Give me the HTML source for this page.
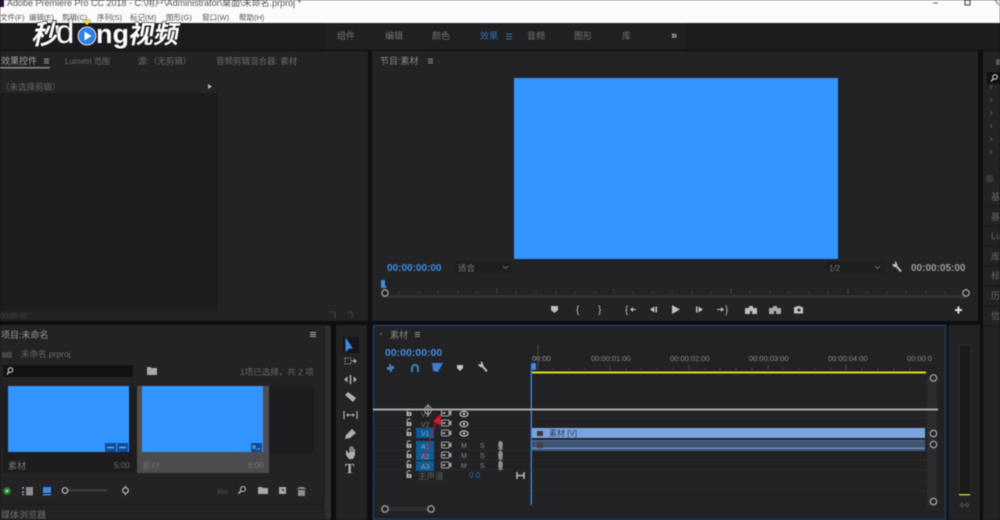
<!DOCTYPE html>
<html><head><meta charset="utf-8"><style>
html,body{margin:0;padding:0;background:#0e0e10;width:1000px;height:520px;overflow:hidden}
svg{display:block;filter:blur(.55px)}
text{font-family:"Liberation Sans","Noto Sans CJK SC",sans-serif;fill:#8f8f8f;font-size:9px}
.b{fill:#3c8be0}
.l{fill:#8a8a8a}
.d{fill:#666}
.w{fill:#747474}
</style></head><body>
<svg width="1000" height="520" viewBox="0 0 1000 520" xmlns="http://www.w3.org/2000/svg">
<defs>
<g id="lock"><path d="M-1.800-1v-1.500a1.800 1.800 0 0 1 3.200-1" fill="none" stroke="#b0b0b0" stroke-width="1"/><rect x="-2.500" y="-1" width="5" height="4" fill="#b0b0b0"/><rect x="-.5" y=".2" width="1" height="1.500" fill="#333"/></g>
<g id="film"><rect x="-4.500" y="-3" width="7.500" height="6" rx="1" fill="none" stroke="#a0a0a0" stroke-width="1.100"/><rect x="-3.500" y="-.8" width="3" height="1.800" fill="#a0a0a0"/><path d="M3-1.500l2.500-1v5l-2.500-1z" fill="#a0a0a0"/></g>
<g id="eye"><ellipse rx="4" ry="2.600" fill="none" stroke="#c4c4c4" stroke-width="1.200"/><circle r="1.200" fill="#c4c4c4"/></g>
<g id="mic"><rect x="-2.200" y="-5" width="4.400" height="7.500" rx="2.200" fill="#8f8f8f"/><path d="M-2.500 3h5M0 2v3" stroke="#8f8f8f" stroke-width="1"/></g>
<g id="ring"><circle r="3.200" fill="#222" stroke="#a0a0a0" stroke-width="1.300"/></g>
<g id="wrench"><path d="M-1.500-2L4 4.500" stroke="#c0c0c0" stroke-width="2" fill="none"/><path d="M-4.500-3.500a3 3 0 0 0 4 3.500l1-2-1.500-3.500-1.500 0 1 2-2 1z" fill="#c0c0c0"/></g>
</defs>

<!-- title bar -->
<rect x="0" y="0" width="1000" height="23" fill="#fbfbfb"/>
<rect x="0" y="0" width="4" height="7" fill="#2a1040"/>
<text x="7" y="6" style="font-size:9px;fill:#555">Adobe Premiere Pro CC 2018 - C:\用户\Administrator\桌面\未命名.prproj *</text>
<g><text x="0" y="20" style="font-size:7.500px;fill:#555">文件(F)</text><text x="29" y="20" style="font-size:7.500px;fill:#555">编辑(E)</text><text x="62" y="20" style="font-size:7.500px;fill:#555">剪辑(C)</text><text x="97" y="20" style="font-size:7.500px;fill:#555">序列(S)</text><text x="130" y="20" style="font-size:7.500px;fill:#555">标记(M)</text><text x="166" y="20" style="font-size:7.500px;fill:#555">图形(G)</text><text x="202" y="20" style="font-size:7.500px;fill:#555">窗口(W)</text><text x="239" y="20" style="font-size:7.500px;fill:#555">帮助(H)</text></g>
<path d="M933 3h5" stroke="#666" stroke-width="1"/><rect x="965" y="0" width="5" height="5" fill="none" stroke="#555" stroke-width="1.200"/><path d="M995 0l4 5" stroke="#666"/>

<!-- workspace bar -->
<rect x="0" y="23" width="1000" height="27" fill="#1c1c1e"/>
<rect x="325" y="23" width="360" height="27" fill="#202022"/>
<g>
<text x="337" y="39" class="w">组件</text><text x="385" y="39" class="w">编辑</text><text x="432" y="39" class="w">颜色</text>
<text x="480" y="39" style="fill:#2f6eaa">效果</text>
<path d="M506 34h6M506 36.500h6M506 39h6" stroke="#2f6eaa"/>
<text x="527" y="39" class="w">音频</text><text x="574" y="39" class="w">图形</text><text x="622" y="39" class="w">库</text>
<text x="671" y="39" style="fill:#bbb;font-size:11px;font-weight:bold">»</text>
</g>

<!-- effect controls panel -->
<rect x="0" y="51" width="368" height="270" fill="#232325"/>
<text x="1" y="64" style="fill:#a0a0a0">效果控件</text>
<path d="M44 59h5M44 61h5M44 63h5" stroke="#999"/>
<rect x="0" y="67" width="50" height="1.500" fill="#8d8d8d"/>
<text x="65" y="64" style="font-size:8px;fill:#6c6c6c">Lumetri 范围</text>
<text x="138" y="64" style="font-size:8.500px;fill:#6c6c6c">源:（无剪辑）</text>
<text x="216" y="64" style="font-size:8.500px;fill:#6c6c6c">音频剪辑混合器: 素材</text>
<rect x="0" y="79" width="218" height="14" fill="#242426"/>
<rect x="0" y="93" width="218" height="218" fill="#1c1c1e"/>
<text x="1" y="90" style="font-size:8.500px;fill:#666">（未选择剪辑）</text>
<path d="M208 84l4 2.500-4 2.500z" fill="#bbb"/>
<text x="0" y="318" style="font-size:7px;fill:#444">00:00:00</text>
<path d="M329 312h6v6M347 312h5v6" stroke="#444" fill="none"/>

<!-- program panel -->
<rect x="372" y="51" width="606" height="270" fill="#232325"/>
<text x="380" y="64" style="fill:#8a8a8a">节目:素材</text>
<path d="M428 59h5M428 61h5M428 63h5" stroke="#888"/>
<rect x="514" y="78" width="324" height="181" fill="#3395ff"/>
<text x="387" y="271" class="b" style="font-size:10px;font-weight:bold">00:00:00:00</text>
<rect x="455" y="261" width="56" height="12" fill="#1e1e20"/>
<text x="458" y="271" style="font-size:8.500px;fill:#787878">适合</text>
<path d="M503 266l2.500 2.500 2.500-2.500" stroke="#666" fill="none"/>
<rect x="826" y="261" width="58" height="12" fill="#1e1e20"/>
<text x="829" y="271" style="font-size:8px;fill:#787878">1/2</text>
<path d="M875 266l2.500 2.500 2.500-2.500" stroke="#666" fill="none"/>
<use href="#wrench" x="897" y="267"/>
<text x="911" y="271" style="font-size:10px;fill:#9a9a9a;font-weight:bold">00:00:05:00</text>
<!-- scrubber -->
<g stroke="#3e3e40"><path d="M399 291v3M419 291v3M438 291v3M458 291v3M477 291v3M497 291v3M516 291v3M536 291v3M556 291v3M575 291v3M595 291v3M614 291v3M633 291v3M653 291v3M672 291v3M692 291v3M711 291v3M731 291v3M750 291v3M770 291v3M789 291v3M809 291v3M828 291v3M848 291v3M867 291v3M887 291v3M906 291v3M926 291v3M945 291v3"/><path d="M497 288v6M614 288v6M731 288v6M848 288v6M966 288v6"/></g>
<rect x="382" y="295" width="584" height="3" fill="#323234"/>
<path d="M381 280h4v5l1.500 2v1h-5.500z" fill="#3c8be0"/>
<use href="#ring" x="385" y="293"/><use href="#ring" x="966" y="293"/>
<!-- transport -->
<g fill="#c0c0c0">
<path d="M551 306h7v4l-3.500 3-3.500-3z"/>
<text x="576" y="313" style="fill:#bbb;font-size:10px">{</text><text x="598" y="313" style="fill:#bbb;font-size:10px">}</text>
<text x="625" y="313" style="fill:#bbb;font-size:10px">{</text><path d="M630 309.500l3-2.500v2h3v1h-3v2z"/>
<path d="M650 309.500l4.500-3v6zM655.500 306.500h1.500v6h-1.500z"/>
<path d="M672 305l8 4.500-8 4.500z"/>
<path d="M696 306.500h1.500v6h-1.500zM698.500 306.500l4.500 3-4.500 3z"/>
<path d="M717 309h4v-2l3 2.500-3 2.500v-2h-4z"/><text x="725" y="313" style="fill:#bbb;font-size:10px">}</text>
<path d="M745 308h4v-2h4v2h4v6h-5v-3h-2v3h-5z"/>
<path d="M769 308h4v-2h4v2h4v6h-5v-3h-2v3h-5z" fill="#aaa"/>
<path d="M794 307h2l1-1h3l1 1h2v6.500h-9z"/><circle cx="799" cy="310" r="1.500" fill="#232325"/>
<path d="M955 309h2.500v-2.500h2v2.500h2.500v2h-2.500v2.500h-2v-2.500h-2.500z" fill="#ddd"/>
</g>

<!-- right strip -->
<rect x="983" y="51" width="17" height="469" fill="#232325"/>
<path d="M996 60h4M996 62h4M996 64h4" stroke="#888"/>
<rect x="987" y="72" width="13" height="12" fill="#121214"/>
<circle cx="995" cy="77" r="2.300" fill="none" stroke="#ccc" stroke-width="1.100"/><path d="M993 79l-2 2.500" stroke="#ccc" stroke-width="1.300"/>
<g stroke="#555" fill="none"><path d="M990 85l2 2-2 2M990 98l2 2-2 2M990 111l2 2-2 2M990 124l2 2-2 2M990 137l2 2-2 2M990 150l2 2-2 2"/></g>
<rect x="986" y="175" width="7" height="7" fill="#3a3a3c"/>
<g fill="#1b1b1d"><rect x="984" y="205" width="16" height="2"/><rect x="984" y="225" width="16" height="2"/><rect x="984" y="245" width="16" height="2"/><rect x="984" y="265" width="16" height="2"/><rect x="984" y="285" width="16" height="2"/><rect x="984" y="305" width="16" height="2"/><rect x="984" y="325" width="16" height="2"/></g>
<g><text x="991" y="200" class="d">基</text><text x="991" y="220" class="d">基</text><text x="991" y="239" class="d">Lu</text><text x="991" y="260" class="d">库</text><text x="991" y="279" class="d">标</text><text x="991" y="299" class="d">历</text><text x="991" y="319" class="d">信</text></g>

<!-- project panel -->
<rect x="0" y="325" width="330" height="195" fill="#232325"/>
<rect x="325" y="325" width="6" height="195" fill="#2f2f31" rx="3"/>
<text x="1" y="338" style="fill:#989898">项目:未命名</text>
<path d="M310 332.500h6M310 334.500h6M310 336.500h6" stroke="#aaa"/>
<rect x="2" y="352" width="10" height="6" fill="#444"/>
<text x="21" y="357" style="font-size:8.500px;fill:#6a6a6a">未命名.prproj</text>
<rect x="3" y="365" width="130" height="12" fill="#121214"/>
<circle cx="10.500" cy="370" r="2.300" fill="none" stroke="#ccc" stroke-width="1.100"/><path d="M9 372l-2 2.500" stroke="#ccc" stroke-width="1.300"/>
<rect x="147" y="368" width="10" height="7" fill="#aaa"/><rect x="147" y="367" width="4" height="2" fill="#aaa"/>
<text x="240" y="375" style="font-size:8.500px;fill:#666">1项已选择，共 2 项</text>
<!-- bins -->
<rect x="3" y="386" width="311" height="67" fill="#1d1d1f"/>
<rect x="3" y="452" width="134" height="21" fill="#1d1d1f"/>
<rect x="8" y="386" width="121" height="66" fill="#3395ff"/>
<rect x="105" y="443" width="11" height="9" fill="#0d4d9e"/><rect x="117" y="443" width="11" height="9" fill="#0d4d9e"/>
<path d="M107 447.500h7M119 447.500h7" stroke="#8ab" stroke-width="1.500"/>
<text x="8" y="469" style="fill:#787878">素材</text>
<text x="114" y="468" style="font-size:8px;fill:#6a6a6a">5:00</text>
<rect x="137" y="386" width="132" height="67" fill="#4f4f51"/>
<rect x="137" y="452" width="132" height="21" fill="#4c4c4e"/>
<rect x="142" y="386" width="121" height="66" fill="#3395ff"/>
<rect x="251" y="443" width="11" height="9" fill="#0d4d9e"/>
<path d="M253 449v-3h2v3M257 449h3" stroke="#8ab" fill="none"/>
<text x="142" y="469" style="fill:#6b6b6b">素材</text>
<text x="248" y="468" style="font-size:8px;fill:#7c7c7c">5:00</text>
<!-- project toolbar -->
<circle cx="7" cy="491" r="4" fill="#1f7a2a"/><rect x="5.500" y="489.500" width="3" height="3" fill="#9c9"/>
<path d="M22 487h2v2h-2zM22 491h2v2h-2zM22 494h2v1.500h-2zM26 487h7v8.500h-7z" fill="#8c8c8c"/>
<rect x="43" y="487" width="8" height="6" fill="#3c8be0"/><rect x="43" y="494" width="8" height="1.500" fill="#3c8be0"/>
<rect x="65" y="489.500" width="42" height="1.500" fill="#4a4a4c"/><circle cx="65" cy="490.500" r="2.800" fill="#232325" stroke="#bbb" stroke-width="1.200"/>
<circle cx="125.500" cy="490.500" r="2.800" fill="none" stroke="#bbb" stroke-width="1.200"/><path d="M125.500 485.500v2M125.500 493.500v2" stroke="#bbb"/>
<text x="217" y="494" style="font-size:7px;fill:#555">Bin</text>
<circle cx="243" cy="489" r="2.500" fill="none" stroke="#c0c0c0" stroke-width="1.100"/><path d="M241 491l-2.500 2.500" stroke="#c0c0c0" stroke-width="1.300"/>
<path d="M258 487h4l1 1h5v6h-10z" fill="#aaa"/>
<path d="M279 487h7v7h-7z" fill="#aaa"/><path d="M281 489h3v3" fill="#444"/>
<path d="M299 487h5v1h2v1h-9v-1h2zM298 490h7v6h-7z" fill="#8c8c8c"/>
<rect x="0" y="504" width="323" height="1" fill="#1b1b1d"/>
<text x="1" y="518" style="fill:#707070">媒体浏览器</text>

<!-- tools -->
<rect x="336" y="325" width="31" height="195" fill="#232325"/>
<rect x="343" y="337" width="16" height="16" fill="#161618"/>
<path d="M346 339v12l3-3h3z" fill="#3c8be0" stroke="#3c8be0" stroke-width="1"/>
<g fill="#b0b0b0" stroke="#b0b0b0">
<rect x="345" y="358" width="6" height="6" fill="none" stroke-dasharray="1.500 1" stroke="#999"/><path d="M352 360.500h2v-2l3 2.500-3 2.500v-2h-2z" stroke="none"/>
<path d="M344 379.500l3.500-3v6zM357 379.500l-3.500-3v6z" stroke="none"/><path d="M350.500 375v9" stroke-width="1.500"/>
<path d="M345 395l3-3 8 6-3 4z" stroke="none"/>
<path d="M344 411v8M357 411v8" stroke-width="1.200"/><path d="M346 415l2.500-2v4zM355 415l-2.500-2v4z" stroke="none"/><path d="M348 415h5" stroke-width="1"/>
<path d="M345 439l1-4 6-6 4 4-6 5z" stroke="none"/>
<path d="M346 450v5l3 4h4l2-4v-6h-1v3h-.5v-5h-1v5h-.5v-6h-1v6h-.5v-5h-1v6h-.5l-2-2z" stroke="none"/>
</g>
<text x="345" y="473" style="font-family:'Liberation Serif',serif;font-size:14px;font-weight:bold;fill:#bbb">T</text>

<!-- timeline -->
<rect x="373.500" y="325.500" width="572" height="194" fill="#222224" stroke="#1f3f63" stroke-width="1.500"/>
<circle cx="381" cy="334" r="1" fill="#666"/>
<text x="390" y="338" style="fill:#888">素材</text>
<path d="M415 332.500h5M415 334.500h5M415 336.500h5" stroke="#888"/>
<text x="385" y="356" class="b" style="font-size:10.500px;font-weight:bold">00:00:00:00</text>
<g fill="#3c80c8">
<path d="M389 364h2v2h3v3h-2v3h-2v-2h-3v-3h2z"/>
<path d="M411 372v-4a4 4 0 0 1 8 0v4h-2v-4a2 2 0 0 0-4 0v4z"/>
<path d="M432 363h11l-5 9-5-1z"/>
<path d="M457 365h6v3l-3 3-3-3z" fill="#c8c8c8"/>
</g>
<use href="#wrench" x="483" y="367"/>
<text x="532" y="361" style="font-size:7.500px;fill:#9a9a9a">00:00</text>
<text x="591" y="361" style="font-size:7.500px;fill:#8a8a8a">00:00:01:00</text>
<text x="670" y="361" style="font-size:7.500px;fill:#8a8a8a">00:00:02:00</text>
<text x="749" y="361" style="font-size:7.500px;fill:#8a8a8a">00:00:03:00</text>
<text x="828" y="361" style="font-size:7.500px;fill:#8a8a8a">00:00:04:00</text>
<text x="907" y="361" style="font-size:7.500px;fill:#8a8a8a">00:00:0</text>
<g stroke="#4a4a4c"><path d="M538 345v25M610 365v5M689 365v5M768 365v5M846 365v5"/><path d="M553 368v2M569 368v2M585 368v2M626 368v2M641 368v2M657 368v2M673 368v2M705 368v2M720 368v2M736 368v2M752 368v2M783 368v2M799 368v2M815 368v2M831 368v2M862 368v2M878 368v2M894 368v2M910 368v2"/></g>
<rect x="532" y="371.500" width="394" height="2" fill="#dede1e"/>
<rect x="531" y="363" width="5" height="7" rx="1.500" fill="#3c8be0"/>
<rect x="530.500" y="370" width="1.500" height="135" fill="#3a7cc6"/>
<rect x="927" y="378" width="10" height="128" fill="#2c2c2e"/>
<!-- track separators -->
<g stroke="#29292b"><path d="M374 428h157M374 439h157M374 450h157M374 460h157M374 470h157M374 481h157M532 418h394M532 428h394M532 460h394M532 470h394M532 481h394M532 491h394"/></g>
<!-- white drag bar -->
<rect x="373" y="408.500" width="565" height="2" fill="#a8a8a8"/>
<!-- track headers -->
<use href="#lock" x="409" y="413"/><use href="#lock" x="409" y="423"/><use href="#lock" x="409" y="433"/><use href="#lock" x="409" y="445"/><use href="#lock" x="409" y="455"/><use href="#lock" x="409" y="465"/><use href="#lock" x="409" y="475"/>
<text x="421" y="417" style="font-size:7px;fill:#777">V3</text>
<text x="421" y="427" style="font-size:7px;fill:#777">V2</text>
<rect x="416" y="428" width="18" height="10" fill="#0e5c96"/><text x="421" y="436" style="font-size:7px;fill:#7fa8c8">V1</text>
<rect x="416" y="441" width="18" height="10" fill="#0e5c96"/><rect x="416" y="450" width="18" height="10" fill="#0e5c96"/><rect x="416" y="461" width="18" height="10" fill="#0e5c96"/>
<text x="421" y="449" style="font-size:7px;fill:#7fa8c8">A1</text><text x="421" y="459" style="font-size:7px;fill:#7fa8c8">A2</text><text x="421" y="469" style="font-size:7px;fill:#7fa8c8">A3</text>
<use href="#film" x="446" y="413"/><use href="#film" x="446" y="423"/><use href="#film" x="446" y="433"/><use href="#film" x="446" y="445"/><use href="#film" x="446" y="455"/><use href="#film" x="446" y="465"/>
<use href="#eye" x="464" y="414"/><use href="#eye" x="464" y="424"/><use href="#eye" x="464" y="433.500"/>
<g><text x="461" y="448" class="l" style="font-size:7px">M</text><text x="461" y="458" class="l" style="font-size:7px">M</text><text x="461" y="468" class="l" style="font-size:7px">M</text><text x="480" y="448" class="l" style="font-size:7px">S</text><text x="480" y="458" class="l" style="font-size:7px">S</text><text x="480" y="468" class="l" style="font-size:7px">S</text></g>
<use href="#mic" x="500.500" y="446"/><use href="#mic" x="500.500" y="456"/><use href="#mic" x="500.500" y="466"/>
<text x="418" y="479" style="font-size:8.500px;fill:#5f5f5f">主声道</text>
<text x="469" y="478" style="font-size:8px;fill:#2f6aa8">0.0</text>
<path d="M517 472v7M524 472v7M517 475.500h7" stroke="#bbb" stroke-width="1.500"/>
<!-- clips -->
<rect x="532" y="428" width="393" height="10" fill="#7aa4dd"/>
<rect x="537" y="431" width="6" height="5" fill="#3a3a3c"/>
<text x="549" y="436" style="font-size:8px;fill:#2f3b52">素材 [V]</text>
<rect x="532" y="440" width="393" height="11" fill="#3d5474"/>
<rect x="532" y="447.500" width="393" height="1.500" fill="#6c8cb8"/><rect x="532" y="440" width="393" height="1" fill="#5a6f90"/>
<rect x="537" y="442" width="6" height="6" fill="#444"/>
<use href="#ring" x="933.500" y="378"/><use href="#ring" x="933.500" y="433.500"/><use href="#ring" x="933.500" y="444.500"/><use href="#ring" x="933.500" y="501.500"/>
<!-- horizontal scroll -->
<rect x="385" y="507" width="46" height="4" fill="#2e2e30"/>
<use href="#ring" x="385" y="509"/><use href="#ring" x="431" y="509"/>
<!-- cursor + arrow -->
<g fill="none" stroke="#a8a8a8"><rect x="425" y="406" width="6" height="8" rx="3"/><path d="M428 404v12M423 410h10"/></g>
<path d="M423 461l14-43" stroke="#c8142a" stroke-width="1"/>
<path d="M441 414l-1 11-7-4z" fill="#e8102a"/>

<!-- meter -->
<rect x="948" y="325" width="32" height="195" fill="#222224"/>
<rect x="959" y="345" width="12" height="150" fill="#1b1b1d" stroke="#2f2f31"/>
<rect x="959" y="494" width="11" height="1.500" fill="#c4c43a"/>
<circle cx="962" cy="505" r="1.500" fill="none" stroke="#555"/><circle cx="967" cy="505" r="1.500" fill="none" stroke="#555"/>

<!-- logo -->
<g style="paint-order:stroke">
<text transform="translate(31,44) skewX(-14) scale(1,1.050)" style="font-size:26px;font-weight:bold;fill:#fff;stroke:#1a1a1a;stroke-width:1.500;paint-order:stroke">秒</text>
<text x="56" y="43" style="font-size:33px;fill:#fff;stroke:#1a1a1a;stroke-width:1;paint-order:stroke">d</text>
<circle cx="87" cy="36" r="8.500" fill="#2f7fe8" stroke="#fff" stroke-width="1.700"/>
<path d="M84.500 31.500l7 4.500-7 4.500z" fill="#fff"/>
<path d="M83 21l4 4 4-4-1.500-2-2.500 1.500-2.500-1.500z" fill="#f4e04a" stroke="#333" stroke-width=".5"/>
<text x="96" y="43" style="font-size:27px;fill:#fff;font-weight:bold;stroke:#1a1a1a;stroke-width:1;paint-order:stroke">ng</text>
<text transform="translate(128,43) skewX(-10)" style="font-size:25px;font-weight:bold;fill:#fff;stroke:#1a1a1a;stroke-width:1.300;paint-order:stroke">视频</text>
</g>
</svg>
</body></html>
